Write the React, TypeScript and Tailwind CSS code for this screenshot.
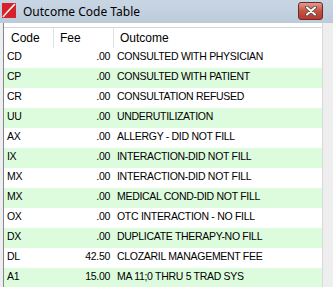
import React from 'react';

// Outcome code rows as shown in the dialog
const rows: Array<{ code: string; fee: string; outcome: string }> = [
  { code: 'CD', fee: '.00', outcome: 'CONSULTED WITH PHYSICIAN' },
  { code: 'CP', fee: '.00', outcome: 'CONSULTED WITH PATIENT' },
  { code: 'CR', fee: '.00', outcome: 'CONSULTATION REFUSED' },
  { code: 'UU', fee: '.00', outcome: 'UNDERUTILIZATION' },
  { code: 'AX', fee: '.00', outcome: 'ALLERGY - DID NOT FILL' },
  { code: 'IX', fee: '.00', outcome: 'INTERACTION-DID NOT FILL' },
  { code: 'MX', fee: '.00', outcome: 'INTERACTION-DID NOT FILL' },
  { code: 'MX', fee: '.00', outcome: 'MEDICAL COND-DID NOT FILL' },
  { code: 'OX', fee: '.00', outcome: 'OTC INTERACTION - NO FILL' },
  { code: 'DX', fee: '.00', outcome: 'DUPLICATE THERAPY-NO FILL' },
  { code: 'DL', fee: '42.50', outcome: 'CLOZARIL MANAGEMENT FEE' },
  { code: 'A1', fee: '15.00', outcome: 'MA 11;0 THRU 5 TRAD SYS' },
];

const AppIcon = () => (
  <svg width="14" height="15" viewBox="0 0 14 15" className="shrink-0">
    <rect x="0" y="0" width="14" height="15" fill="#d4232b" />
    <path d="M1 14 C5 9 9 5 13 1" stroke="#ffffff" strokeWidth="1.6" fill="none" />
    <path d="M1 14 L6 8.5" stroke="#f3c2c4" strokeWidth="0.8" fill="none" />
  </svg>
);

const CloseButton = () => (
  <div className="w-[25px] h-[18px] rounded-[3px] border border-[#6b2a2a] bg-gradient-to-b from-[#e09a8f] via-[#c8503f] to-[#b43b2c] flex items-center justify-center">
    <svg width="12" height="10" viewBox="0 0 12 10">
      <path d="M2 1.5 L10 8.5 M10 1.5 L2 8.5" stroke="#4a4a4a" strokeWidth="3.6" strokeLinecap="round" />
      <path d="M2 1.5 L10 8.5 M10 1.5 L2 8.5" stroke="#ffffff" strokeWidth="2" strokeLinecap="round" />
    </svg>
  </div>
);

export default function App() {
  return (
    <div className="w-[333px] h-[287px] overflow-hidden bg-[#eeeeee] flex flex-col font-['Liberation_Sans',Arial,sans-serif]">
      {/* title bar */}
      <div className="h-[23px] shrink-0 bg-gradient-to-b from-[#c8d6e4] to-[#bccbda] flex items-start pt-[2px] pl-[1px] pr-[10px]">
        <div className="mt-[1px] ml-[1px]">
          <AppIcon />
        </div>
        <span className="ml-[7px] text-[12px] leading-[19px] text-black font-['Noto_Sans',sans-serif]">
          Outcome Code Table
        </span>
        <div className="ml-auto">
          <CloseButton />
        </div>
      </div>

      {/* table panel */}
      <div className="flex-1 flex pl-[3px] pr-[10px] min-h-0">
        <div className="flex-1 bg-white border-l border-l-[#828790] border-r border-r-[#d9d9d9] pt-[4px] text-[10.5px] tracking-[-0.3px] text-black">
          <div className="grid grid-cols-[50px_60px_1fr] h-[21px] border-t border-t-[#d5d5d5] items-stretch text-[12px] tracking-normal">
            <div className="border-r border-r-[#e3e3e3] pl-[7px] flex items-center">Code</div>
            <div className="border-r border-r-[#e3e3e3] pl-[6px] flex items-center">Fee</div>
            <div className="pl-[6px] flex items-center">Outcome</div>
          </div>
          {rows.map((r, i) => (
            <div
              key={i}
              className={`grid grid-cols-[50px_60px_1fr] h-[20px] items-center pb-[2px] ${
                i % 2 === 1 ? 'bg-[#ddfcdd]' : 'bg-white'
              }`}
            >
              <div className="pl-[3px]">{r.code}</div>
              <div className="text-right pr-[4px]">{r.fee}</div>
              <div className="pl-[3px]">{r.outcome}</div>
            </div>
          ))}
        </div>
      </div>
    </div>
  );
}
